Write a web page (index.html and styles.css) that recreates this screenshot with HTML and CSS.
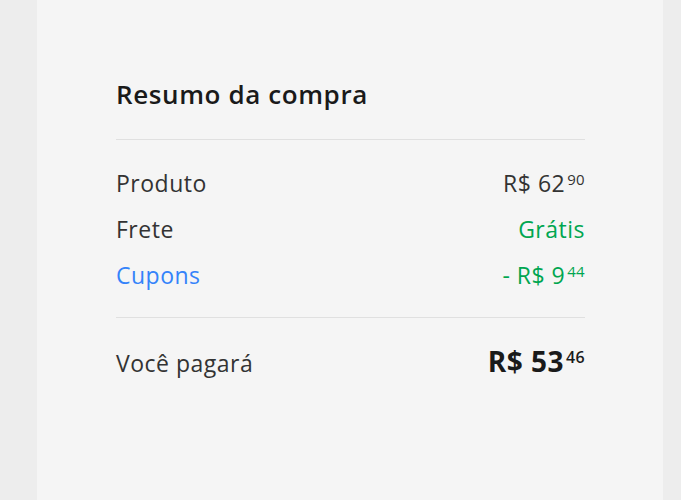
FILE: index.html
```html
<!DOCTYPE html>
<html lang="pt-BR">
<head>
<meta charset="utf-8">
<title>Resumo da compra</title>
<link rel="stylesheet" href="styles.css">
</head>
<body>
<div class="page">
  <div class="summary">
    <h2 class="summary_title">Resumo da compra</h2>
    <ul class="summary_list">
      <li class="row">
        <span>Produto</span>
        <span class="price">R$ 62<sup>90</sup></span>
      </li>
      <li class="row">
        <span>Frete</span>
        <span class="green">Grátis</span>
      </li>
      <li class="row">
        <span class="blue">Cupons</span>
        <span class="price green">- R$ 9<sup>44</sup></span>
      </li>
    </ul>
    <div class="row total">
      <span>Você pagará</span>
      <span class="price strong">R$ 53<sup>46</sup></span>
    </div>
  </div>
</div>
</body>
</html>
```

FILE: styles.css
```css
*{
	margin:0;
	padding:0;
	box-sizing:border-box;
	}
li{
	list-style:none;
	}
body{
	background:#ededed;
	font-family:"Open Sans","Liberation Sans",sans-serif;
	color:#333;
	}
.page{
	padding:0 18px 0 37px;
	}
.summary{
	background:#f5f5f5;
	min-height:500px;
	padding:76px 78px 0 79px;
	}
.summary_title{
	font-size:26px;
	font-weight:600;
	letter-spacing:.6px;
	line-height:36px;
	color:#1a1a1a;
	padding-bottom:27px;
	border-bottom:1px solid #e0e0e0;
	}
.summary_list{
	padding:20px 0 19px;
	border-bottom:1px solid #e0e0e0;
	}
.row{
	display:flex;
	justify-content:space-between;
	align-items:baseline;
	font-size:23px;
	letter-spacing:.5px;
	line-height:46px;
	}
.price sup{
	font-size:15px;
	line-height:0;
	letter-spacing:.3px;
	vertical-align:baseline;
	position:relative;
	top:-7px;
	margin-left:2px;
	}
.green{
	color:#00a650;
	}
.blue{
	color:#3483fa;
	}
.total{
	padding-top:20px;
	}
.strong{
	font-weight:700;
	font-size:28px;
	letter-spacing:.5px;
	color:#1a1a1a;
	}
.strong sup{
	font-size:16px;
	font-weight:600;
	top:-9px;
	}
```
